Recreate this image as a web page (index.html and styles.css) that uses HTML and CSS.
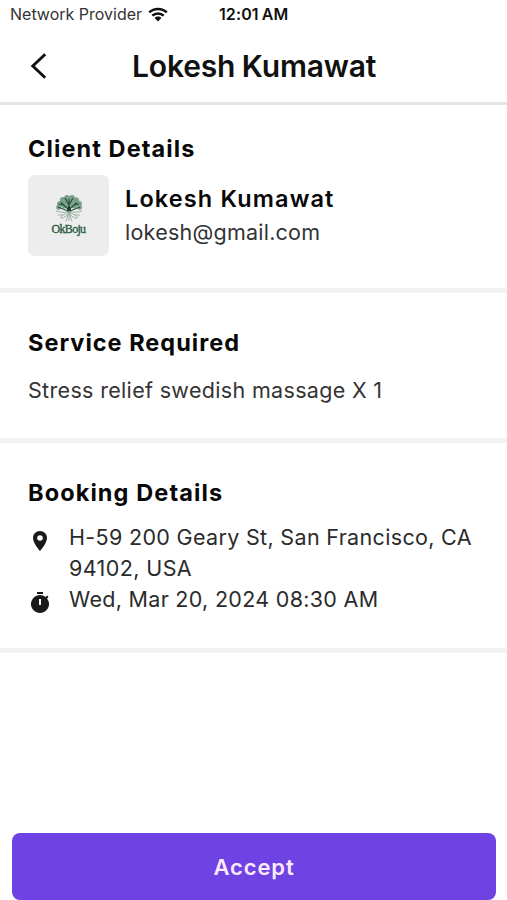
FILE: index.html
```html
<!DOCTYPE html>
<html lang="en">
<head>
<meta charset="utf-8">
<title>Booking request</title>
<link rel="stylesheet" href="styles.css">
</head>
<body>
<div class="screen">
  <div class="status">
    <span class="carrier">Network Provider</span>
    <svg class="wifi" viewBox="0 0 20 15" aria-hidden="true">
      <path d="M1.2 5.4C6 .7 14 .7 18.8 5.4M4.3 8.7c3.2-3.1 8.2-3.1 11.4 0" fill="none" stroke="#111" stroke-width="2.5"/>
      <path d="M6.6 11c1.9-1.9 4.9-1.9 6.8 0L10 14.5z" fill="#111"/>
    </svg>
    <span class="time">12:01 AM</span>
  </div>
  <header class="header">
    <svg class="back" viewBox="0 0 18 28" aria-hidden="true"><path d="M15.2 2.2 2.8 14l12.4 11.8" fill="none" stroke="#111" stroke-width="2.9"/></svg>
    <h1 class="title">Lokesh Kumawat</h1>
  </header>
  <main>
    <section class="section client">
      <h2 class="heading">Client Details</h2>
      <div class="person">
        <div class="logo">
          <svg class="tree" viewBox="0 0 28 28" aria-hidden="true">
            <g fill="#7b9f8b">
              <circle cx="5" cy="10" r="3"/><circle cx="3.5" cy="13.5" r="2.4"/><circle cx="8" cy="6" r="3.1"/><circle cx="12" cy="3.8" r="2.8"/><circle cx="17" cy="3.8" r="2.9"/><circle cx="21" cy="6.3" r="3.1"/><circle cx="24" cy="10" r="2.9"/><circle cx="24.6" cy="13.6" r="2.4"/><circle cx="14" cy="8" r="4"/><circle cx="9.5" cy="11" r="3.4"/><circle cx="19" cy="11" r="3.4"/>
            </g>
            <path d="M14 17V5M14 16 6 8.5M14 15.5l8-7M13 17 3 13M15 17l10-4M14 11l-4-7M14 11l4-7M9 11l-5-1M19 11l5-1" fill="none" stroke="#235039" stroke-width="1.1"/>
            <path d="M12.8 12h2.4l.8 6h-4z" fill="#173f2b"/>
            <path d="M14 17.5C9 19 4 18 1 17M14 17.5c5 1.5 10 .5 13-.5M14 17.5c-3 3-7 4-11 3.5M14 17.5c3 3 7 4 11 3.5M14 17.5c-1 4-4 6-8 7M14 17.5c1 4 4 6 8 7M14 17.5l-3 10M14 17.5l3 10M14 18v9M8 21l-3 3M20 21l3 3" fill="none" stroke="#92aa9c" stroke-width=".9"/>
          </svg>
          <span class="brand">OkBoju</span>
        </div>
        <div class="contact">
          <div class="name">Lokesh Kumawat</div>
          <div class="email">lokesh@gmail.com</div>
        </div>
      </div>
    </section>
    <section class="section service">
      <h2 class="heading service-heading">Service Required</h2>
      <p class="item">Stress relief swedish massage X 1</p>
    </section>
    <section class="section booking">
      <h2 class="heading booking-heading">Booking Details</h2>
      <div class="row">
        <svg class="icon" viewBox="0 0 24 24" aria-hidden="true"><path d="M12 2C8.13 2 5 5.13 5 9c0 5.25 7 13 7 13s7-7.75 7-13c0-3.87-3.13-7-7-7zm0 9.8a2.8 2.8 0 1 1 0-5.6 2.8 2.8 0 0 1 0 5.6z" fill="#1a1a1a"/></svg>
        <div class="value"><span class="line street">H-59 200 Geary St, San Francisco, CA</span> <span class="line city">94102, USA</span></div>
      </div>
      <div class="row">
        <svg class="icon" viewBox="0 0 24 24" aria-hidden="true"><path fill-rule="evenodd" d="M15 1H9v2h6V1zm-4 13h2V8h-2v6zm8.03-6.61 1.42-1.42c-.43-.51-.9-.99-1.41-1.41l-1.42 1.42A8.96 8.96 0 0 0 12 4a9 9 0 1 0 7.03 3.39z" fill="#1a1a1a"/></svg>
        <div class="value"><span class="line date">Wed, Mar 20, 2024 08:30 AM</span></div>
      </div>
    </section>
  </main>
  <footer class="footer"><button class="accept" type="button">Accept</button></footer>
</div>
</body>
</html>
```
FILE: styles.css
```css
* { box-sizing: border-box; }
body { margin: 0; background: #fff; color: #111; font-family: Inter, "Liberation Sans", sans-serif; }
.screen { height: 900px; display: flex; flex-direction: column; overflow: hidden; }
.status { height: 30px; display: flex; align-items: center; padding: 0 0 2px 10px; font-size: 16px; white-space: nowrap; }
.carrier { width: 132px; color: #333; letter-spacing: 0; }
.wifi { width: 20px; height: 15px; margin-left: 6px; }
.time { margin-left: 51px; font-weight: 600; letter-spacing: .1px; word-spacing: -1px; }
.header { height: 75px; display: flex; align-items: center; padding: 0 0 1px 30px; border-bottom: 3px solid #e5e5e5; }
.back { width: 18px; height: 28px; }
.title { margin: 0 0 0 84px; font-size: 30px; font-weight: 600; letter-spacing: -.15px; word-spacing: -1px; line-height: 36px; white-space: nowrap; }
.section { padding: 29px 28px 0; border-bottom: 5px solid #f2f2f2; }
.client { height: 188px; }
.service { height: 150px; padding-top: 35px; }
.booking { height: 210px; padding-top: 35px; }
.heading { margin: 0; font-size: 23.5px; font-weight: 650; line-height: 30px; letter-spacing: 1.1px; white-space: nowrap; color: #080808; }
.service-heading { letter-spacing: 1px; }
.person { display: flex; margin-top: 11px; }
.logo { width: 81px; height: 81px; border-radius: 7px; background: #ededed; display: flex; flex-direction: column; align-items: center; padding-top: 19px; }
.tree { width: 28px; height: 28px; }
.brand { font: 400 12px/14px "Liberation Serif", serif; letter-spacing: -.7px; color: #24573b; -webkit-text-stroke: .3px #24573b; }
.contact { margin-left: 16px; padding-top: 9px; white-space: nowrap; }
.name { font-size: 23.5px; font-weight: 600; line-height: 30px; letter-spacing: 1.12px; color: #080808; }
.email { margin-top: 2px; font-size: 21.5px; line-height: 32px; letter-spacing: .24px; color: #333; }
.item { margin: 17px 0 0; font-size: 21.5px; line-height: 30px; letter-spacing: .33px; color: #333; white-space: nowrap; }
.booking-heading { margin-bottom: 14px; }
.row { display: flex; font-size: 21.5px; line-height: 31px; letter-spacing: .3px; color: #2b2b2b; }
.icon { width: 24px; height: 24px; margin-top: 7px; }
.value { margin-left: 17px; }
.line { display: block; white-space: nowrap; }
.street { letter-spacing: .33px; }
.city { letter-spacing: .4px; }
.footer { margin-top: auto; padding: 0 11px 0 12px; }
.accept { display: block; width: 100%; height: 67px; border: 0; border-radius: 8px; background: #6f42e3; color: #fbeaff; font: 600 22px Inter, sans-serif; letter-spacing: .9px; }
```
